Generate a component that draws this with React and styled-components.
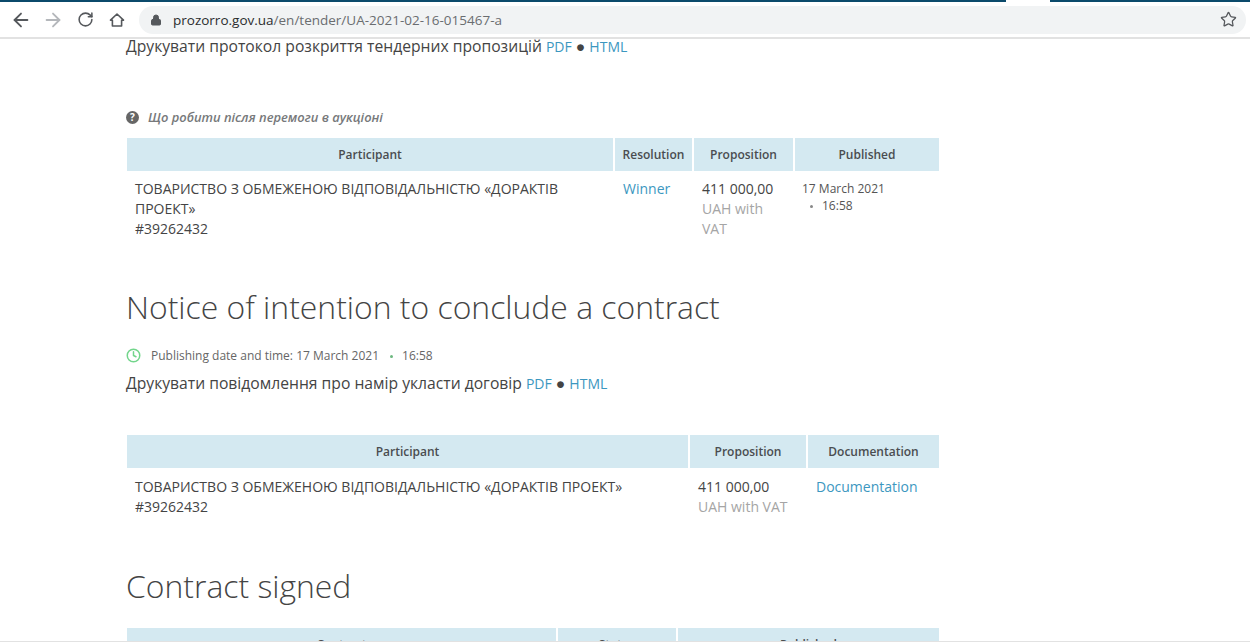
import React from 'react'
import styled, { createGlobalStyle } from 'styled-components'
import { ArrowLeft, ArrowRight, RotateCw, Lock, Star, Clock } from 'lucide-react'

const GlobalStyle = createGlobalStyle`
  html, body {
    margin: 0;
    height: 642px;
    overflow: hidden;
    background: #fff;
  }
  body {
    font-family: "Open Sans", "Liberation Sans", sans-serif;
    color: #444;
  }
`

const TopStrip = styled.div`
  height: 2px;
  display: flex;
  justify-content: space-between;
  background: #fff;
`

const StripPart = styled.div`
  width: ${p => p.$width}px;
  background: #0b4a6b;
`

const Toolbar = styled.header`
  height: 37px;
  box-sizing: border-box;
  display: flex;
  align-items: center;
  padding: 0 4px 0 5px;
  border-bottom: 2px solid #e2e2e2;
  background: #fff;
`

const NavButton = styled.span`
  width: 32px;
  display: flex;
  justify-content: center;
  color: ${p => (p.$disabled ? '#b4b7bb' : '#55585c')};
`

const AddressBar = styled.div`
  flex: 1;
  height: 28px;
  display: flex;
  align-items: center;
  gap: 11px;
  padding: 0 9px 0 11px;
  margin-left: 6px;
  border-radius: 14px;
  background: #f1f3f4;
  font-size: 13.5px;
  color: #6a6d70;
`

const Host = styled.span`
  color: #2b2c2e;
`

const Url = styled.span`
  flex: 1;
`

const Page = styled.main`
  width: 813px;
  margin-top: -1px;
  padding: 0 0 0 126px;
`

const PrintLine = styled.p`
  margin: ${p => p.$top || 0}px 0 0;
  font-size: 15.68px;
  line-height: 16px;
  color: #444;
`

const Link = styled.a`
  color: #3c97bf;
  font-size: 14px;
`

const Hint = styled.div`
  display: flex;
  align-items: center;
  gap: 9px;
  margin: 53px 0 0;
  height: 18px;
  font-size: 12.9px;
  font-style: italic;
  font-weight: 600;
  color: #77797b;
`

const HintIcon = styled.span`
  width: 13px;
  height: 13px;
  border-radius: 50%;
  background: #666;
  color: #fff;
  font-size: 10px;
  font-style: normal;
  font-weight: 700;
  line-height: 13px;
  text-align: center;
`

const Table = styled.div`
  display: grid;
  grid-template-columns: ${p => p.$columns};
  column-gap: 2px;
  row-gap: ${p => p.$rowGap || 0}px;
  margin: ${p => p.$top}px 0 0 1px;
  width: 812px;
`

const HeadCell = styled.div`
  height: 33px;
  display: flex;
  align-items: center;
  justify-content: center;
  background: #d4e9f1;
  font-size: 12px;
  font-weight: 600;
  color: #4a4d50;
`

const Cell = styled.div`
  padding: 8px 8px 0;
  font-size: 14px;
  line-height: 20px;
  color: #444;
`

const Muted = styled.span`
  color: #a5a5a5;
`

const CellLink = styled.a`
  color: #3c97bf;
`

const DateCell = styled.div`
  padding: 9px 8px 0 7px;
  font-size: 12px;
  line-height: 17px;
  color: #555;
`

const Dot = styled.span`
  display: inline-block;
  width: 3px;
  height: 3px;
  border-radius: 50%;
  background: ${p => p.$color};
  margin: 0 ${p => p.$gap}px 2px ${p => p.$left}px;
`

const Heading = styled.h2`
  margin: ${p => p.$top}px 0 0;
  font-size: 31.9px;
  line-height: 44px;
  font-weight: 300;
  color: #444;
`

const Published = styled.div`
  display: flex;
  align-items: center;
  height: 18px;
  margin-top: 17px;
  font-size: 12px;
  color: #666;
  gap: 10px;
`

const GreenClock = styled(Clock)`
  color: #72d58b;
`

const WindowEdge = styled.div`
  position: fixed;
  left: 0;
  right: 0;
  bottom: 0;
  height: 1px;
  background: #e2e2e2;
`

const HomeIcon = () => (
  <svg width="16" height="16" viewBox="0 0 16 16" fill="none" stroke="currentColor" strokeWidth="1.6" strokeLinejoin="round">
    <path d="M8 2 L14.5 8.2 H12.6 V14 H3.4 V8.2 H1.5 Z" />
  </svg>
)

const App = () => (
  <>
    <GlobalStyle />
    <TopStrip>
      <StripPart $width={1006} />
      <StripPart $width={200} />
    </TopStrip>
    <Toolbar>
      <NavButton><ArrowLeft size={22} strokeWidth={2} /></NavButton>
      <NavButton $disabled><ArrowRight size={22} strokeWidth={2} /></NavButton>
      <NavButton><RotateCw size={17} strokeWidth={2.2} /></NavButton>
      <NavButton><HomeIcon /></NavButton>
      <AddressBar>
        <Lock size={12} fill="#55585c" strokeWidth={2} color="#55585c" />
        <Url><Host>prozorro.gov.ua</Host>/en/tender/UA-2021-02-16-015467-a</Url>
        <Star size={17} strokeWidth={1.8} color="#55585c" />
      </AddressBar>
    </Toolbar>
    <Page>
      <PrintLine>
        Друкувати протокол розкриття тендерних пропозицій <Link>PDF</Link> ● <Link>HTML</Link>
      </PrintLine>
      <Hint><HintIcon>?</HintIcon>Що робити після перемоги в аукціоні</Hint>
      <Table $top={12} $columns="486px 77px 99px 144px">
        <HeadCell>Participant</HeadCell>
        <HeadCell>Resolution</HeadCell>
        <HeadCell>Proposition</HeadCell>
        <HeadCell>Published</HeadCell>
        <Cell>ТОВАРИСТВО З ОБМЕЖЕНОЮ ВІДПОВІДАЛЬНІСТЮ «ДОРАКТІВ ПРОЕКТ»<br />#39262432</Cell>
        <Cell><CellLink>Winner</CellLink></Cell>
        <Cell>411 000,00<br /><Muted>UAH with VAT</Muted></Cell>
        <DateCell>17 March 2021<br /><Dot $color="#888" $left={8} $gap={9} />16:58</DateCell>
      </Table>
      <Heading $top={46}>Notice of intention to conclude a contract</Heading>
      <Published>
        <GreenClock size={15} strokeWidth={2.4} />
        <span>Publishing date and time: 17 March 2021<Dot $color="#6cb87f" $left={11} $gap={9} />16:58</span>
      </Published>
      <PrintLine $top={11}>
        Друкувати повідомлення про намір укласти договір <Link>PDF</Link> ● <Link>HTML</Link>
      </PrintLine>
      <Table $top={43} $rowGap={1} $columns="561px 116px 131px">
        <HeadCell>Participant</HeadCell>
        <HeadCell>Proposition</HeadCell>
        <HeadCell>Documentation</HeadCell>
        <Cell>ТОВАРИСТВО З ОБМЕЖЕНОЮ ВІДПОВІДАЛЬНІСТЮ «ДОРАКТІВ ПРОЕКТ»<br />#39262432</Cell>
        <Cell>411 000,00<br /><Muted>UAH with VAT</Muted></Cell>
        <Cell><CellLink>Documentation</CellLink></Cell>
      </Table>
      <Heading $top={47}>Contract signed</Heading>
      <Table $top={20} $columns="429px 118px 261px">
        <HeadCell>Contract</HeadCell>
        <HeadCell>Status</HeadCell>
        <HeadCell>Published</HeadCell>
      </Table>
    </Page>
    <WindowEdge />
  </>
)

export default App
